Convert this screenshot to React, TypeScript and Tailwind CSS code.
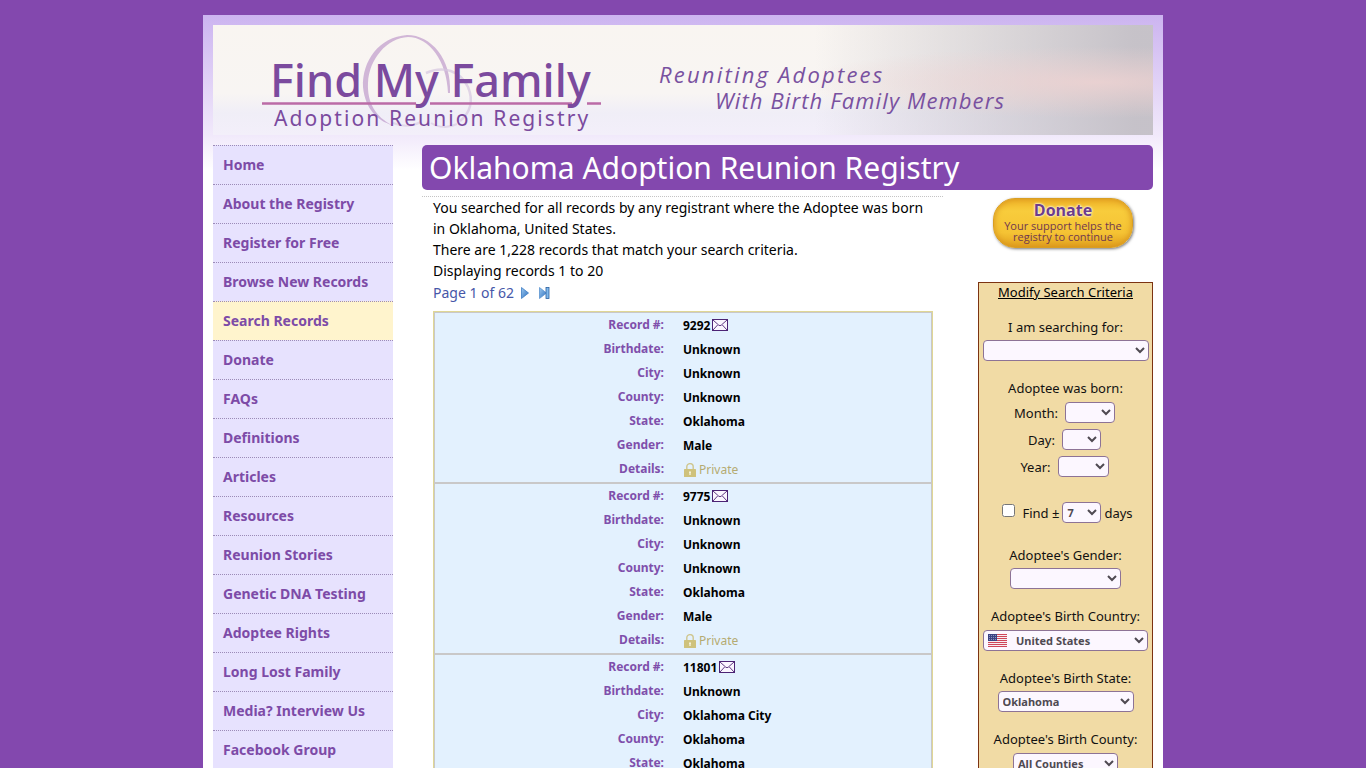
import React from 'react';

const navItems = [
  'Home',
  'About the Registry',
  'Register for Free',
  'Browse New Records',
  'Search Records',
  'Donate',
  'FAQs',
  'Definitions',
  'Articles',
  'Resources',
  'Reunion Stories',
  'Genetic DNA Testing',
  'Adoptee Rights',
  'Long Lost Family',
  'Media? Interview Us',
  'Facebook Group',
];

const records = [
  { id: '9292', city: 'Unknown', county: 'Unknown' },
  { id: '9775', city: 'Unknown', county: 'Unknown' },
  { id: '11801', city: 'Oklahoma City', county: 'Oklahoma' },
];

const selectClass =
  'h-[21px] rounded border border-[#8d7396] bg-[#fcf7ff] text-[11px] font-bold text-[#4f4a52]';

function EnvelopeIcon() {
  return (
    <svg width="16" height="12" viewBox="0 0 16 12" fill="none" stroke="#4c2374" aria-hidden="true">
      <rect x="0.5" y="0.5" width="15" height="11" fill="#fbf6ff" />
      <path d="M1 1l5.8 5.2q1.2 1 2.4 0L15 1M1 11l4.6-5M15 11l-4.6-5" strokeWidth="0.9" />
    </svg>
  );
}

function LockIcon() {
  return (
    <svg width="12" height="14" viewBox="0 0 12 14" aria-hidden="true">
      <path d="M2.8 7V3.8a3.2 3.2 0 0 1 6.4 0V7" fill="none" stroke="#cfc68f" strokeWidth="1.4" />
      <rect y="6" width="12" height="8" rx="0.6" fill="#cfc27c" />
      <path d="M6 8.2a1 1 0 0 1 .6 1.8v2H5.4v-2A1 1 0 0 1 6 8.2z" fill="#fbf8e6" />
    </svg>
  );
}

function FlagIcon() {
  return (
    <svg width="19" height="13" viewBox="0 0 19 13" aria-hidden="true">
      <rect width="19" height="13" rx="1" fill="#f6eef2" />
      <path
        d="M0 .5h19M0 2.5h19M0 4.5h19M0 6.5h19M0 8.5h19M0 10.5h19M0 12.5h19"
        stroke="#d0455a"
      />
      <rect width="9" height="7" fill="#3c4383" />
      <path
        d="M1 1.5h7M1 3.5h7M1 5.5h7"
        stroke="#aeb3d6"
        strokeWidth="0.8"
        strokeDasharray="0.9 1.1"
      />
    </svg>
  );
}

function Arrows() {
  return (
    <span className="flex items-center gap-2.5">
      <a href="#next" aria-label="Next page">
        <svg width="8" height="12" viewBox="0 0 8 12">
          <defs>
            <linearGradient id="arrow" x1="0" y1="0" x2="1" y2="1">
              <stop offset="0" stopColor="#9cc8ee" />
              <stop offset="1" stopColor="#2d70c0" />
            </linearGradient>
          </defs>
          <path d="M.5.5L7.5 6l-7 5.5z" fill="url(#arrow)" stroke="#3c7cc4" strokeWidth="0.8" />
        </svg>
      </a>
      <a href="#last" aria-label="Last page">
        <svg width="11" height="12" viewBox="0 0 11 12">
          <path d="M.5.5L7.5 6l-7 5.5z" fill="url(#arrow)" stroke="#5b93cf" strokeWidth="0.8" />
          <rect x="7" y="0.5" width="3" height="11" fill="#7fb8ec" stroke="#2a5f9e" strokeWidth="0.8" />
        </svg>
      </a>
    </span>
  );
}

function Header() {
  return (
    <header className="relative flex h-[110px] overflow-hidden bg-[radial-gradient(ellipse_300px_36px_at_94%_52%,#f0d3d2cc,#f0d3d200),linear-gradient(90deg,#c3bfc600_64%,#c3bfc680_82%,#c3bfc6f0_98%),linear-gradient(180deg,#f9f5f1,#f8f5f3_62%,#f0eef7_80%,#f3effa)]">
      <svg className="absolute top-0 left-0" width="400" height="110" viewBox="0 0 400 110" fill="none" aria-hidden="true">
        <path
          d="M237 68C239 34 218 10 194 10C166 12 149 36 150 62C152 84 165 96 179 100C163 92 154 78 155 58C156 34 174 13 195 12C216 12 234 36 235 68z"
          fill="#b68cc4"
          opacity="0.6"
        />
        <path d="M213 48c18-8 34-2 42 14c6 14 2 26-8 34" stroke="#d6c6df" strokeWidth="2.5" opacity="0.7" />
        <path d="M180 98c10 4 20 3 28 -1M218 98c8 5 18 5 26 1" stroke="#d6c6df" strokeWidth="2" opacity="0.6" />
        <path d="M49 78.500h154M217 78.500h142M374 78.500h14" stroke="#bb6ba6" strokeWidth="2.600" />
      </svg>
      <div className="relative ml-[57px] w-[389px] text-[#7b4a9e]">
        <div className="pt-[33px] text-[45px] leading-[44px] font-medium whitespace-nowrap">Find My Family</div>
        <div className="pt-1 pl-1 text-[21px] leading-6 tracking-widest whitespace-nowrap">Adoption Reunion Registry</div>
      </div>
      <div className="relative pt-[36px] font-['Open_Sans',sans-serif] text-[22px] leading-[26px] whitespace-nowrap text-[#7951a0] italic">
        <div className="tracking-widest">Reuniting Adoptees</div>
        <div className="pl-14 tracking-wider">With Birth Family Members</div>
      </div>
    </header>
  );
}

function RecordTable({ record }: { record: (typeof records)[number] }) {
  const rows = [
    ['Birthdate:', 'Unknown'],
    ['City:', record.city],
    ['County:', record.county],
    ['State:', 'Oklahoma'],
    ['Gender:', 'Male'],
  ];
  return (
    <table className="w-full border-separate border-spacing-0 border border-[#c9c8c8] bg-[#e3f1fe] text-xs leading-4 font-bold">
      <tbody>
        <tr className="h-[25px]">
          <th className="w-[229px] pb-0.5 text-right text-[#7f4fab]">Record #:</th>
          <td className="pl-[19px]">
            <span className="flex items-center gap-0.5">
              {record.id}
              <a href="#contact" aria-label="Contact registrant" className="pb-0.5">
                <EnvelopeIcon />
              </a>
            </span>
          </td>
        </tr>
        {rows.map(([label, value]) => (
          <tr key={label} className="h-6">
            <th className="pb-0.5 text-right text-[#7f4fab]">{label}</th>
            <td className="pl-[19px]">{value}</td>
          </tr>
        ))}
        <tr className="h-6">
          <th className="pb-0.5 text-right text-[#7f4fab]">Details:</th>
          <td className="pl-5">
            <span className="flex items-center gap-[3px] font-normal text-[#b5ab72]">
              <LockIcon />
              Private
            </span>
          </td>
        </tr>
      </tbody>
    </table>
  );
}

function DonateButton() {
  return (
    <button className="h-[50px] w-[140px] rounded-[22px] border border-[#d99e22] bg-[linear-gradient(180deg,#f0b428,#f8cc3c_25%,#f5c334_70%,#e2a21f)] pb-1 font-['Open_Sans',sans-serif] text-[11px] leading-[11px] font-medium text-[#70384f] shadow-[1px_1px_3px_#777,inset_0_0_6px_#d58f1c]">
      <span className="block text-base leading-5 font-bold text-[#6d3c8a] [text-shadow:0_0_2px_#fff,0_0_3px_#fff]">
        Donate
      </span>
      Your support helps the
      <br />
      registry to continue
    </button>
  );
}

function SearchForm() {
  return (
    <form className="flex flex-col items-center border border-[#7c3312] bg-[#f1dba5] pb-6 text-[13px] leading-[18px] text-[#111]">
      <a href="#modify" className="text-black underline">
        Modify Search Criteria
      </a>
      <label htmlFor="searching" className="mt-[17px]">I am searching for:</label>
      <select id="searching" className={`mt-1 w-[166px] ${selectClass}`}>
        <option></option>
      </select>

      <div className="mt-[18px]">Adoptee was born:</div>
      <div className="mt-[5px] flex flex-col items-center gap-1.5 pr-0.5">
        <div className="flex items-center gap-[7px]">
          <label htmlFor="month">Month:</label>
          <select id="month" className={`w-[50px] ${selectClass}`}>
            <option></option>
          </select>
        </div>
        <div className="flex items-center gap-[7px]">
          <label htmlFor="day">Day:</label>
          <select id="day" className={`w-[39px] ${selectClass}`}>
            <option></option>
          </select>
        </div>
        <div className="flex items-center gap-[7px]">
          <label htmlFor="year">Year:</label>
          <select id="year" className={`w-[51px] ${selectClass}`}>
            <option></option>
          </select>
        </div>
      </div>

      <div className="mt-[25px] flex items-center gap-[3px] pl-1">
        <input id="range" type="checkbox" className="mr-1 mb-1 size-[13px]" />
        <label htmlFor="range">Find ±</label>
        <select aria-label="Number of days" className={`w-[39px] ${selectClass}`}>
          <option>7</option>
        </select>
        <span>days</span>
      </div>

      <label htmlFor="gender" className="mt-[23px]">Adoptee's Gender:</label>
      <select id="gender" className={`mt-1 w-[111px] ${selectClass}`}>
        <option></option>
      </select>

      <label htmlFor="country" className="mt-[18px]">Adoptee's Birth Country:</label>
      <div className="relative mt-[5px]">
        <select id="country" className={`w-[165px] pl-7 ${selectClass}`}>
          <option>United States</option>
        </select>
        <span className="pointer-events-none absolute top-1 left-[5px]">
          <FlagIcon />
        </span>
      </div>

      <label htmlFor="state" className="mt-[18px]">Adoptee's Birth State:</label>
      <select id="state" className={`mt-1 w-[136px] ${selectClass}`}>
        <option>Oklahoma</option>
      </select>

      <label htmlFor="county" className="mt-[18px]">Adoptee's Birth County:</label>
      <select id="county" className={`mt-[5px] w-[105px] ${selectClass}`}>
        <option>All Counties</option>
      </select>
    </form>
  );
}

export default function App() {
  return (
    <div className="h-screen overflow-y-auto bg-[#8348ae] pt-[15px] font-['Noto_Sans',sans-serif] text-sm text-black [scrollbar-width:none]">
      <div className="mx-auto max-w-[960px] bg-white bg-[linear-gradient(180deg,#ccb4f0,#f1e9fb_120px,#fff_155px)] p-2.5">
        <Header />
        <div className="mt-2.5 flex items-start gap-[29px]">
          <nav className="w-[180px] shrink-0">
            <ul>
              {navItems.map((item) => (
                <li key={item}>
                  <a
                    href="#nav"
                    className={`block border-t border-dotted border-[#9c8bb8] px-2.5 py-[9px] leading-5 font-bold text-[#7d4ba7] ${
                      item === 'Search Records' ? 'bg-[#fff4cd]' : 'bg-[#e7e2fe]'
                    }`}
                  >
                    {item}
                  </a>
                </li>
              ))}
            </ul>
          </nav>

          <main className="min-w-0 flex-1">
            <h1 className="rounded-[5px] bg-[#8348ae] px-[7px] text-[30px] leading-[45px] text-white">
              Oklahoma Adoption Reunion Registry
            </h1>
            <div className="mt-1.5 flex items-start justify-between">
              <section className="w-[521px] border-t border-dotted border-[#c4c4c4] pr-2.5 pl-[11px]">
                <p className="leading-[21px]">
                  You searched for all records by any registrant where the Adoptee was born in Oklahoma, United States.
                  <br />
                  There are 1,228 records that match your search criteria.
                  <br />
                  Displaying records 1 to 20
                </p>
                <div className="flex items-center gap-[7px] leading-6 text-[#4657a8]">
                  Page 1 of 62
                  <Arrows />
                </div>
                <div className="mt-1.5 border border-[#e0d795]">
                  {records.map((record) => (
                    <RecordTable key={record.id} record={record} />
                  ))}
                </div>
              </section>

              <aside className="w-[175px]">
                <div className="pt-0.5 pb-[34px] pl-[15px]">
                  <DonateButton />
                </div>
                <SearchForm />
              </aside>
            </div>
          </main>
        </div>
      </div>
    </div>
  );
}
